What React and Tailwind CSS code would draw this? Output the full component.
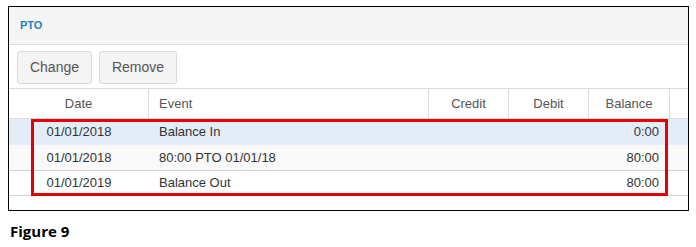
import React from "react";

export default function App() {
  const rows = [
    { date: "01/01/2018", event: "Balance In", balance: "0:00", cls: "h-[26px] bg-[#e3edf7]" },
    { date: "01/01/2018", event: "80:00 PTO 01/01/18", balance: "80:00", cls: "h-[26px] bg-[#f9f9f9] border-b border-[#d4d4d4]" },
    { date: "01/01/2019", event: "Balance Out", balance: "80:00", cls: "h-[25px] bg-white border-b border-[#d4d4d4]" },
  ];
  const cols = "grid grid-cols-[140px_280px_80px_80px_81px_1fr]";

  return (
    <div className="relative w-[696px] h-[247px] bg-white font-['Liberation_Sans',Arial,sans-serif] text-[13px] text-[#333]">
      <div className="pt-[6px] pl-[8px]">
        <div className="w-[681px] h-[205px] border border-black">
          <div className="h-[38px] bg-[#f5f5f5] border-b border-[#dcdcdc] flex items-center pl-[11px]">
            <span className="text-[11px] font-bold text-[#2a7fc1]">PTO</span>
          </div>

          <div className="h-[44px] flex items-start gap-[7px] pl-[8px] pt-[6px] border-b border-[#dcdcdc]">
            <button className="w-[75px] h-[33px] rounded-[3px] border border-[#dadada] bg-[#f4f4f4] text-[14px] text-[#555]">
              Change
            </button>
            <button className="w-[78px] h-[33px] rounded-[3px] border border-[#dadada] bg-[#f4f4f4] text-[14px] text-[#555]">
              Remove
            </button>
          </div>

          <div className={`${cols} h-[30px] border-b border-[#dcdcdc] text-[#555]`}>
            <div className="border-r border-[#dcdcdc] flex items-center justify-center">Date</div>
            <div className="border-r border-[#dcdcdc] flex items-center pl-[10px]">Event</div>
            <div className="border-r border-[#dcdcdc] flex items-center justify-center">Credit</div>
            <div className="border-r border-[#dcdcdc] flex items-center justify-center">Debit</div>
            <div className="border-r border-[#dcdcdc] flex items-center justify-center">Balance</div>
            <div />
          </div>

          {rows.map((r, i) => (
            <div key={i} className={`${cols} ${r.cls}`}>
              <div className="flex items-center justify-center">{r.date}</div>
              <div className="flex items-center pl-[10px]">{r.event}</div>
              <div />
              <div />
              <div className="flex items-center justify-end pr-[11px]">{r.balance}</div>
              <div />
            </div>
          ))}
        </div>
      </div>

      <div className="absolute left-[31px] top-[119px] w-[637px] h-[77px] border-[3px] border-[#e60000]" />

      <div className="pl-[10px] pt-[13px] font-['Open_Sans',sans-serif] font-bold text-[15px] text-black leading-none">
        Figure 9
      </div>
    </div>
  );
}
